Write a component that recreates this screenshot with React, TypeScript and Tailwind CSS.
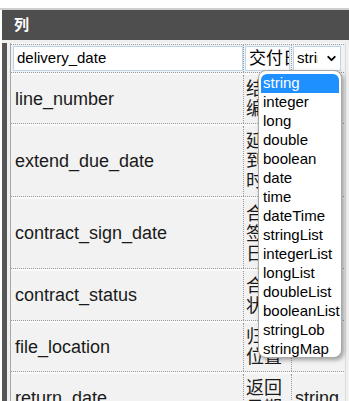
import { ChevronDown } from "lucide-react";

type ColumnRow = {
  name: string;
  label: string;
  type: string;
  height: string;
};

const rows: ColumnRow[] = [
  { name: "line_number", label: "结算编号", type: "string", height: "h-[49px]" },
  { name: "extend_due_date", label: "延期到期时间", type: "string", height: "h-[71px]" },
  { name: "contract_sign_date", label: "合同签订日期", type: "string", height: "h-[70px]" },
  { name: "contract_status", label: "合同状态", type: "string", height: "h-[50px]" },
  { name: "file_location", label: "归档位置", type: "string", height: "h-[49px]" },
  { name: "return_date", label: "返回日期", type: "string", height: "h-[49px]" },
];

const types = [
  "string",
  "integer",
  "long",
  "double",
  "boolean",
  "date",
  "time",
  "dateTime",
  "stringList",
  "integerList",
  "longList",
  "doubleList",
  "booleanList",
  "stringLob",
  "stringMap",
];

function ColumnRowView({ row }: { row: ColumnRow }) {
  return (
    <div className={`mt-[2px] flex border-b border-dotted border-[#9a9a9a] bg-[#f2f2f2] ${row.height}`}>
      <div className="flex w-[233px] shrink-0 items-center border-r border-dotted border-[#9a9a9a] pl-[4px] text-[18px] text-[#1a1a1a]">
        {row.name}
      </div>
      <div className="flex w-[48px] shrink-0 items-center overflow-hidden border-r border-dotted border-[#9a9a9a] pl-[2px] text-[18px] leading-[20px] text-[#1a1a1a]">
        <span className="w-[38px] break-all">{row.label}</span>
      </div>
      <div className="flex w-[51px] shrink-0 items-center overflow-hidden pl-[3px] text-[18px] text-[#1a1a1a]">{row.type}</div>
    </div>
  );
}

function TypeMenu() {
  return (
    <div className="absolute left-[258px] top-[70px] h-[288px] w-[84px] rounded-[8px] border border-[#a8a8a8] bg-white px-[2px] pt-[3px] shadow-[2px_2px_4px_rgba(0,0,0,0.35)]">
      {types.map((type, index) => (
        <div
          key={type}
          className={`h-[19px] whitespace-nowrap pl-[2px] text-[15px] leading-[18px] ${
            index === 0 ? "rounded-t-[6px] bg-[#1e90ff] text-white" : "text-black"
          }`}
        >
          {type}
        </div>
      ))}
    </div>
  );
}

export default function App() {
  return (
    <div className="relative h-[401px] w-[349px] overflow-hidden bg-white font-['Liberation_Sans','Noto_Sans_CJK_SC',sans-serif]">
      <div className="h-[8px]" />
      <div className="border-t-2 border-[#cfcfcf]" />
      <div className="ml-[2px] flex h-[30px] items-center bg-[#4e4e4e] pl-[12px] text-[15px] font-bold text-white">列</div>
      <div className="ml-[2px] h-[361px] bg-[#f0f0f0] pt-[3px]">
        <div className="flex h-full border-l-[5px] border-[#555555] pl-[3px]">
          <div className="h-full w-[334px] border-l border-[#a8a8a8] bg-[#fafafa] pt-[1px]">
            <div className="flex h-[29px] border-b border-t border-dotted border-[#9a9a9a] bg-[#f2f2f2]">
              <div className="flex w-[233px] shrink-0 items-center border-r border-dotted border-[#9a9a9a] pl-[2px]">
                <div className="flex h-[25px] w-[230px] items-center border border-[#bcd3ee] bg-white pl-[3px] text-[15px] text-black">
                  delivery_date
                </div>
              </div>
              <div className="flex w-[48px] shrink-0 items-center border-r border-dotted border-[#9a9a9a] pl-[1px]">
                <div className="flex h-[25px] w-[45px] items-center overflow-hidden whitespace-nowrap border border-[#bcd3ee] bg-white pl-[3px] text-[17px] text-black">
                  交付日期
                </div>
              </div>
              <div className="flex w-[51px] shrink-0 items-center pl-[1px]">
                <div className="flex h-[25px] w-[48px] items-center border border-[#bcd3ee] bg-white pl-[3px] text-[15px] text-black">
                  <span className="w-[21px] overflow-hidden whitespace-nowrap">string</span>
                  <ChevronDown size={13} strokeWidth={3.5} className="ml-[7px] text-black" aria-hidden="true" />
                </div>
              </div>
            </div>
            {rows.map((row) => (
              <ColumnRowView key={row.name} row={row} />
            ))}
          </div>
          <div className="ml-[1px] h-full border-l border-[#dcdcdc]" />
        </div>
      </div>
      <TypeMenu />
    </div>
  );
}
